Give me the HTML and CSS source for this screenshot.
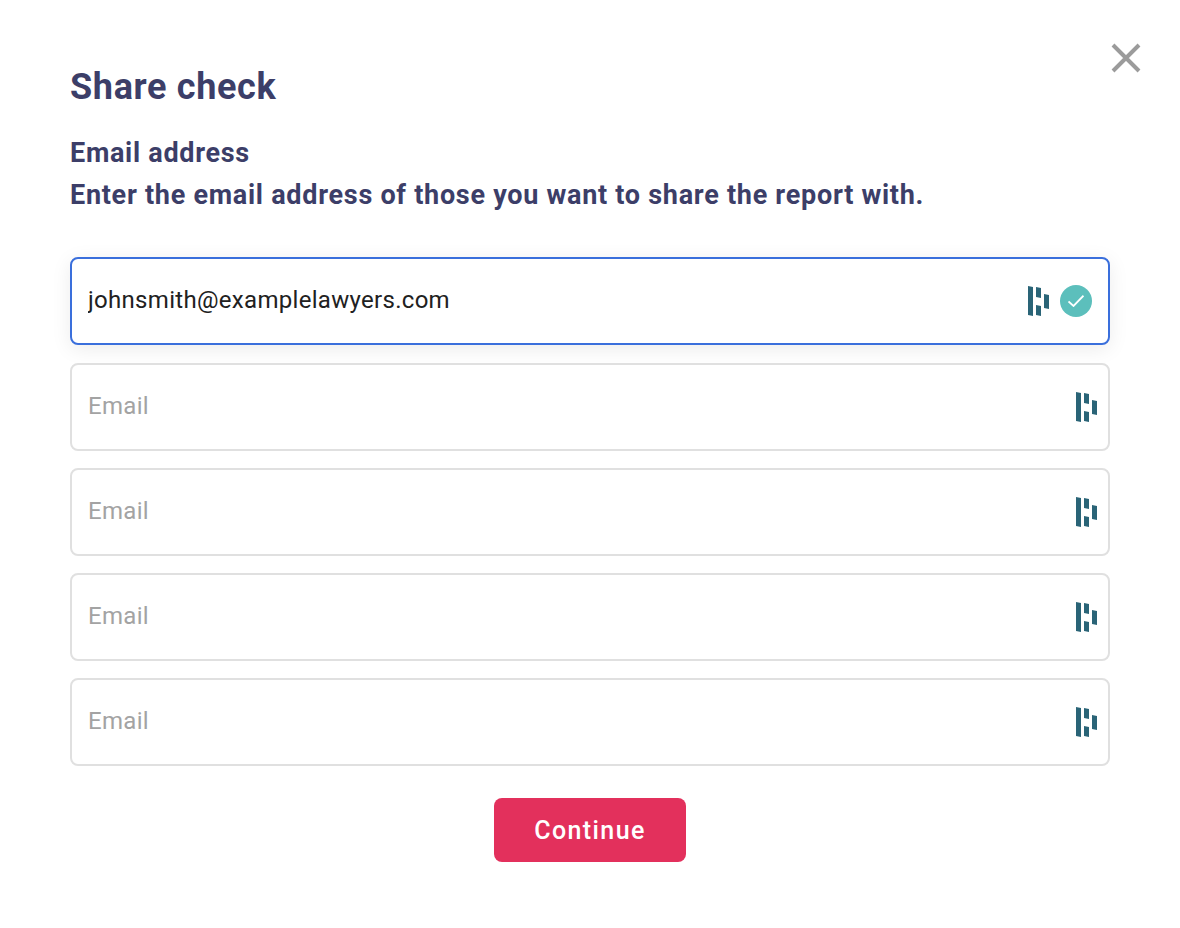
FILE: index.html
```html
<!DOCTYPE html>
<html lang="en">
<head>
    <meta charset="UTF-8">
    <meta name="viewport" content="width=device-width, initial-scale=1.0">
    <title>Share check</title>
    <link rel="stylesheet" href="styles.css">
</head>
<body>

<svg class="defs" width="0" height="0">
    <symbol id="logo" viewBox="0 0 21 30">
        <path d="M0 0l5 1v29l-5-1z"/>
        <path d="M8 1l5 1v10l-5-1z"/>
        <path d="M8 19l5 1v10l-5-1z"/>
        <path d="M16 8l5 1v14l-5-1z"/>
    </symbol>
</svg>

<div class="modal">
    <button class="close" type="button" aria-label="Close">
        <svg width="30" height="30" viewBox="0 0 30 30"><path d="M2 2l26 26M28 2L2 28"/></svg>
    </button>

    <h2>Share check</h2>
    <p class="label">Email address</p>
    <p class="hint">Enter the email address of those you want to share the report with.</p>

    <form class="fields">
        <div class="field active">
            <input type="email" value="johnsmith@examplelawyers.com" placeholder="Email">
            <svg class="logo"><use href="#logo"/></svg>
            <span class="tick">
                <svg width="16" height="12" viewBox="0 0 16 12"><path d="M.5 6.5l5 4.5L15.5.7"/></svg>
            </span>
        </div>
        <div class="field">
            <input type="email" placeholder="Email">
            <svg class="logo"><use href="#logo"/></svg>
        </div>
        <div class="field">
            <input type="email" placeholder="Email">
            <svg class="logo"><use href="#logo"/></svg>
        </div>
        <div class="field">
            <input type="email" placeholder="Email">
            <svg class="logo"><use href="#logo"/></svg>
        </div>
        <div class="field">
            <input type="email" placeholder="Email">
            <svg class="logo"><use href="#logo"/></svg>
        </div>
        <button class="btn" type="button">Continue</button>
    </form>
</div>

</body>
</html>
```

FILE: styles.css
```css
body {
    margin: 0;
    background-color: #fff;
    font-family: Roboto, "Liberation Sans", sans-serif;
}
.defs {
    display: block;
    height: 0;
}
.modal {
    position: relative;
    padding: 66px 70px 0;
}
.close {
    position: absolute;
    top: 43px;
    right: 39px;
    width: 30px;
    height: 30px;
    padding: 0;
    border: none;
    background: none;
}
.close svg {
    display: block;
}
.close path {
    fill: none;
    stroke: #9b9b9b;
    stroke-width: 4;
}
h2 {
    margin: 0 0 24px;
    font-size: 36px;
    line-height: 42px;
    font-weight: 700;
    letter-spacing: 0.65px;
    color: #3c3e68;
}
.label,
.hint {
    margin: 0;
    font-size: 27px;
    line-height: 42px;
    font-weight: 700;
    color: #3c3e68;
}
.label {
    letter-spacing: 0.7px;
}
.hint {
    letter-spacing: 0.72px;
}
.fields {
    display: flex;
    flex-direction: column;
    margin-top: 41px;
}
.field {
    display: flex;
    align-items: center;
    box-sizing: border-box;
    height: 88px;
    margin-bottom: 17px;
    padding: 0 11px 0 16px;
    border: 2px solid #e0e0e0;
    border-radius: 8px;
    background: #fff;
}
.field.active {
    margin-bottom: 18px;
    padding-right: 16px;
    border-color: #3a6fdc;
    box-shadow: 0 4px 20px rgba(0, 0, 0, 0.08);
}
.field input {
    flex: 1;
    min-width: 0;
    padding: 0 0 2px;
    border: none;
    outline: none;
    background: none;
    font-family: inherit;
    font-size: 24px;
    letter-spacing: 0.3px;
    color: #212121;
}
.field input::placeholder {
    color: #a3a3a3;
    opacity: 1;
}
.logo {
    flex: none;
    width: 21px;
    height: 30px;
    fill: #2a6477;
}
.tick {
    flex: none;
    display: flex;
    align-items: center;
    justify-content: center;
    width: 32px;
    height: 32px;
    margin-left: 11px;
    border-radius: 50%;
    background-color: #5cbfbc;
}
.tick path {
    fill: none;
    stroke: #fff;
    stroke-width: 1.8;
}
.btn {
    align-self: center;
    width: 192px;
    height: 64px;
    margin-top: 15px;
    border: none;
    border-radius: 8px;
    background-color: #e3305c;
    color: #fff;
    font-family: inherit;
    font-size: 25px;
    font-weight: 500;
    letter-spacing: 1.4px;
}
```
